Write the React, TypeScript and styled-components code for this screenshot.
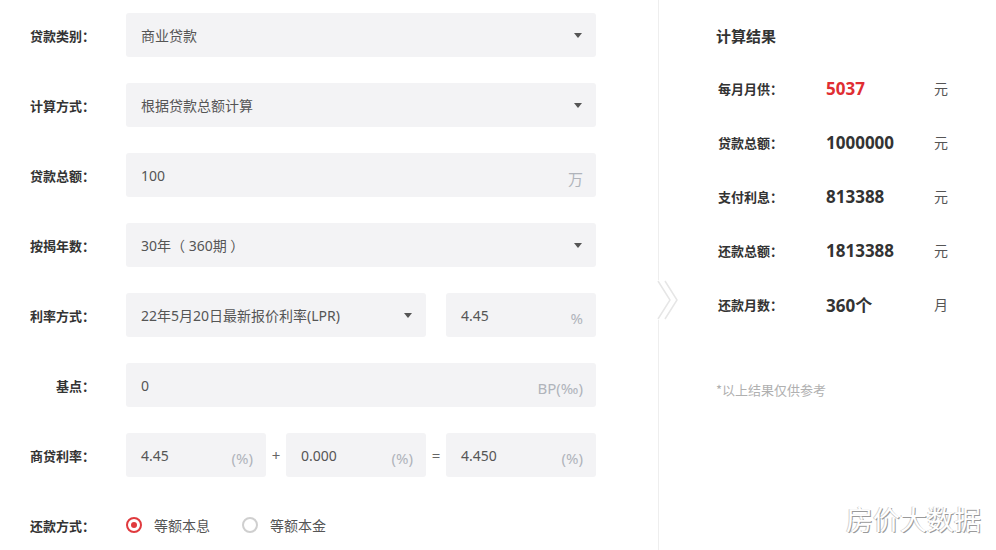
import React from 'react';
import styled, { createGlobalStyle } from 'styled-components';

const GlobalStyle = createGlobalStyle`
  html, body {
    margin: 0;
    padding: 0;
    background: #ffffff;
  }
  body {
    font-family: "Noto Sans", "Noto Sans CJK SC", sans-serif;
    color: #333;
  }
`;

const Page = styled.div`
  position: relative;
  width: 996px;
  height: 550px;
  display: flex;
  overflow: hidden;
  background: #fff;
`;

const FormColumn = styled.div`
  width: 658px;
  box-sizing: border-box;
  padding-top: 13px;
  display: flex;
  flex-direction: column;
  gap: 26px;
`;

const Row = styled.div`
  display: flex;
  align-items: center;
  height: 44px;
`;

const Label = styled.div`
  width: 95px;
  margin-right: 31px;
  text-align: right;
  font-family: "Noto Sans CJK SC", sans-serif;
  font-size: 13px;
  font-weight: 700;
  color: #333;
  white-space: nowrap;
`;

const Field = styled.div<{ $w: number }>`
  width: ${(p) => p.$w}px;
  height: 44px;
  box-sizing: border-box;
  padding: 0 13px 0 15px;
  background: #f3f3f5;
  border-radius: 3px;
  display: flex;
  align-items: center;
  justify-content: space-between;
  font-family: "Noto Sans", "Noto Sans CJK SC", sans-serif;
  font-size: 14px;
  color: #555;
  white-space: nowrap;
`;

const Unit = styled.span`
  margin-top: 6px;
  font-size: 15px;
  color: #b0b4bb;
`;

const Arrow = styled.span`
  width: 0;
  height: 0;
  margin-right: 1px;
  border-left: 4px solid transparent;
  border-right: 4px solid transparent;
  border-top: 5px solid #555;
`;

const Gap = styled.div<{ $w: number }>`
  width: ${(p) => p.$w}px;
`;

const Op = styled.div`
  width: 20px;
  text-align: center;
  font-size: 15px;
  color: #666;
`;

const RadioGroup = styled.div`
  display: flex;
  align-items: center;
`;

const RadioItem = styled.div`
  display: flex;
  align-items: center;
  margin-right: 32px;
  font-family: "Noto Sans CJK SC", sans-serif;
  font-size: 14px;
  color: #555;
`;

const RadioCircle = styled.span<{ $on?: boolean }>`
  width: 16px;
  height: 16px;
  box-sizing: border-box;
  border-radius: 50%;
  border: 2px solid ${(p) => (p.$on ? '#e03a3e' : '#cfcfcf')};
  margin-right: 12px;
  display: flex;
  align-items: center;
  justify-content: center;
  &::after {
    content: '';
    width: 6px;
    height: 6px;
    border-radius: 50%;
    background: ${(p) => (p.$on ? '#e03a3e' : 'transparent')};
  }
`;

const Divider = styled.div`
  position: relative;
  width: 1px;
  background: #eeeeee;
`;

const Chevron = styled.svg`
  position: absolute;
  left: -1px;
  top: 280px;
  background: #fff;
`;

const ResultPanel = styled.div`
  flex: 1;
  padding: 26px 0 0 57px;
  display: flex;
  flex-direction: column;
`;

const Title = styled.div`
  font-family: "Noto Sans CJK SC", sans-serif;
  font-size: 15px;
  font-weight: 700;
  color: #333;
  height: 20px;
  line-height: 20px;
  margin-bottom: 15px;
`;

const ResultRow = styled.div`
  display: flex;
  align-items: center;
  height: 54px;
`;

const ResultLabel = styled.div`
  width: 110px;
  padding-left: 2px;
  box-sizing: border-box;
  font-family: "Noto Sans CJK SC", sans-serif;
  font-size: 13px;
  font-weight: 700;
  color: #333;
`;

const ResultValue = styled.div<{ $red?: boolean }>`
  width: 108px;
  font-family: "Noto Sans", "Noto Sans CJK SC", sans-serif;
  font-size: 17px;
  font-weight: 700;
  color: ${(p) => (p.$red ? '#e02d32' : '#333')};
`;

const ResultUnit = styled.div`
  font-family: "Noto Sans CJK SC", sans-serif;
  font-size: 14px;
  color: #555;
`;

const Note = styled.div`
  margin-top: 49px;
  font-family: "Noto Sans CJK SC", sans-serif;
  font-size: 13px;
  color: #b0b0b0;
`;

const Watermark = styled.div`
  position: absolute;
  right: 15px;
  bottom: 12px;
  font-family: "Noto Sans CJK SC", sans-serif;
  font-size: 27px;
  color: #ffffff;
  text-shadow: 1px 1px 0 #9a9a9a, -1px 0 0 #d0d0d0;
`;

const results = [
  { label: '每月月供：', value: '5037', unit: '元', red: true },
  { label: '贷款总额：', value: '1000000', unit: '元' },
  { label: '支付利息：', value: '813388', unit: '元' },
  { label: '还款总额：', value: '1813388', unit: '元' },
  { label: '还款月数：', value: '360个', unit: '月' },
];

export default function App() {
  return (
    <Page>
      <GlobalStyle />
      <FormColumn>
        <Row>
          <Label>贷款类别：</Label>
          <Field $w={470}>
            商业贷款
            <Arrow />
          </Field>
        </Row>
        <Row>
          <Label>计算方式：</Label>
          <Field $w={470}>
            根据贷款总额计算
            <Arrow />
          </Field>
        </Row>
        <Row>
          <Label>贷款总额：</Label>
          <Field $w={470}>
            100
            <Unit>万</Unit>
          </Field>
        </Row>
        <Row>
          <Label>按揭年数：</Label>
          <Field $w={470}>
            30年（ 360期 ）
            <Arrow />
          </Field>
        </Row>
        <Row>
          <Label>利率方式：</Label>
          <Field $w={300}>
            22年5月20日最新报价利率(LPR)
            <Arrow />
          </Field>
          <Gap $w={20} />
          <Field $w={150}>
            4.45
            <Unit>%</Unit>
          </Field>
        </Row>
        <Row>
          <Label>基点：</Label>
          <Field $w={470}>
            0
            <Unit>BP(‰)</Unit>
          </Field>
        </Row>
        <Row>
          <Label>商贷利率：</Label>
          <Field $w={140}>
            4.45
            <Unit>(%)</Unit>
          </Field>
          <Op>+</Op>
          <Field $w={140}>
            0.000
            <Unit>(%)</Unit>
          </Field>
          <Op>=</Op>
          <Field $w={150}>
            4.450
            <Unit>(%)</Unit>
          </Field>
        </Row>
        <Row>
          <Label>还款方式：</Label>
          <RadioGroup>
            <RadioItem>
              <RadioCircle $on />
              等额本息
            </RadioItem>
            <RadioItem>
              <RadioCircle />
              等额本金
            </RadioItem>
          </RadioGroup>
        </Row>
      </FormColumn>
      <Divider>
        <Chevron width="22" height="40" viewBox="0 0 22 40">
          <path d="M1 1 L13 20 L1 39" fill="none" stroke="#e6e6e6" strokeWidth="1.5" />
          <path d="M8 1 L20 20 L8 39" fill="none" stroke="#e6e6e6" strokeWidth="1.5" />
        </Chevron>
      </Divider>
      <ResultPanel>
        <Title>计算结果</Title>
        {results.map((r) => (
          <ResultRow key={r.label}>
            <ResultLabel>{r.label}</ResultLabel>
            <ResultValue $red={r.red}>{r.value}</ResultValue>
            <ResultUnit>{r.unit}</ResultUnit>
          </ResultRow>
        ))}
        <Note>*以上结果仅供参考</Note>
      </ResultPanel>
      <Watermark>房价大数据</Watermark>
    </Page>
  );
}
